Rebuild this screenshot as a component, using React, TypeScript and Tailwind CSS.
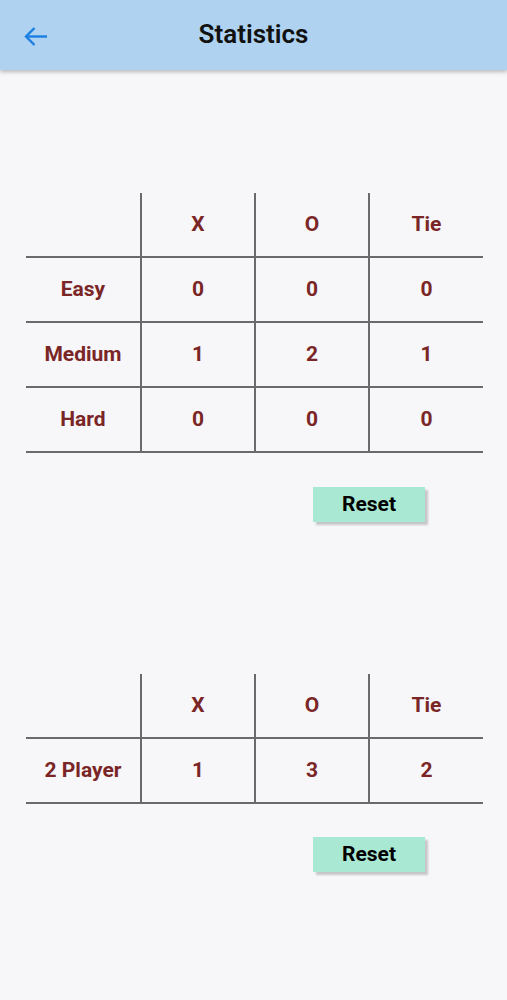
type Row = { label: string; values: number[] };

const cell =
  "flex items-center justify-center h-[65px] text-[21px] font-bold text-[#7a2626]";

function StatsTable({ rows }: { rows: Row[] }) {
  const head = ["", "X", "O", "Tie"];
  return (
    <div className="grid grid-cols-[116px_114px_114px_113px] w-[457px] ml-[26px]">
      {head.map((h, i) => (
        <div
          key={"h" + i}
          className={`${cell} h-[64px] border-b-2 border-[#6a6a6a] ${
            i < 3 ? "border-r-2" : ""
          }`}
        >
          {h}
        </div>
      ))}
      {rows.map((r) => (
        <>
          <div
            key={r.label}
            className={`${cell} border-b-2 border-r-2 border-[#6a6a6a]`}
          >
            {r.label}
          </div>
          {r.values.map((v, i) => (
            <div
              key={r.label + i}
              className={`${cell} border-b-2 border-[#6a6a6a] ${
                i < 2 ? "border-r-2" : ""
              }`}
            >
              {v}
            </div>
          ))}
        </>
      ))}
    </div>
  );
}

function ResetButton() {
  return (
    <div className="flex justify-end w-[457px] ml-[26px] pr-[58px]">
      <button className="w-[112px] h-[35px] bg-[#a9e8d2] text-black text-[21px] font-bold shadow-[3px_3px_2px_rgba(0,0,0,0.2)]">
        Reset
      </button>
    </div>
  );
}

export default function App() {
  return (
    <div
      className="min-h-[1000px] bg-[#f7f6f9]"
      style={{ fontFamily: "Roboto, 'Liberation Sans', sans-serif" }}
    >
      <header className="relative h-[70px] bg-[#aed2ef] flex items-center justify-center shadow-[0_2px_4px_rgba(0,0,0,0.25)]">
        <svg
          className="absolute left-[23px] top-[26px]"
          width="25"
          height="21"
          viewBox="0 0 25 21"
          fill="none"
          stroke="#1c7fe3"
          strokeWidth="2.4"
        >
          <path d="M24 10.5H3" />
          <path d="M11.5 2L3 10.5l8.5 8.5" />
        </svg>
        <h1 className="text-[26px] font-semibold text-[#111] pb-[1px]">Statistics</h1>
      </header>

      <div className="pt-[123px]">
        <StatsTable
          rows={[
            { label: "Easy", values: [0, 0, 0] },
            { label: "Medium", values: [1, 2, 1] },
            { label: "Hard", values: [0, 0, 0] },
          ]}
        />
        <div className="pt-[34px]">
          <ResetButton />
        </div>
      </div>

      <div className="pt-[152px]">
        <StatsTable rows={[{ label: "2 Player", values: [1, 3, 2] }]} />
        <div className="pt-[33px]">
          <ResetButton />
        </div>
      </div>
    </div>
  );
}
